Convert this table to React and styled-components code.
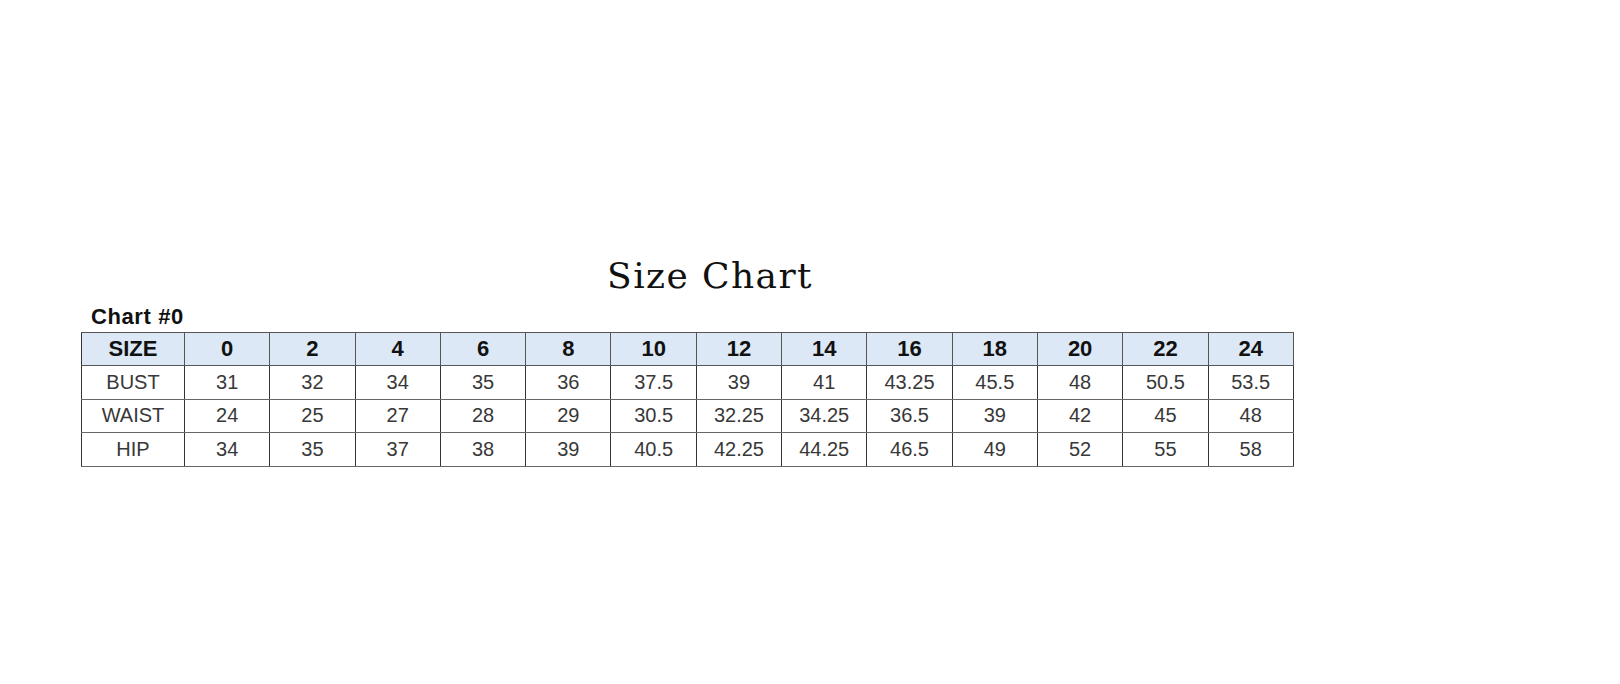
import React from 'react';
import styled, { createGlobalStyle } from 'styled-components';

const GlobalStyle = createGlobalStyle`
  html, body {
    margin: 0;
    padding: 0;
    background: #ffffff;
  }
`;

const Page = styled.div`
  width: 1620px;
  height: 684px;
  box-sizing: border-box;
  padding: 258px 0 0 81px;
  background: #ffffff;
`;

const Chart = styled.div`
  width: 1212px;
  display: flex;
  flex-direction: column;
`;

const Title = styled.h2`
  margin: 0;
  padding-left: 46px;
  text-align: center;
  font-family: "DejaVu Serif", "Liberation Serif", serif;
  font-weight: normal;
  font-size: 36px;
  line-height: 36px;
  letter-spacing: 1.4px;
  color: #111;
`;

const Label = styled.div`
  margin: 12px 0 0 10px;
  font-family: "Liberation Sans", Arial, sans-serif;
  font-weight: bold;
  font-size: 22px;
  line-height: 22px;
  letter-spacing: 0.6px;
  color: #111;
`;

const Table = styled.table`
  margin-top: 4px;
  width: 1212px;
  table-layout: fixed;
  border-collapse: collapse;
  border: 1px solid #333;
  font-family: "Liberation Sans", Arial, sans-serif;
`;

const Col = styled.col`
  width: ${p => (p.$first ? '103px' : '85.3px')};
`;

const HeadCell = styled.th`
  height: 32px;
  padding: 0;
  background: #dce8f5;
  border: 1px solid #555;
  border-left-color: #333;
  font-size: 22px;
  font-weight: bold;
  color: #111;
  text-align: center;
`;

const Cell = styled.td`
  height: 32.5px;
  padding: 0;
  border-top: 1px solid #666;
  border-bottom: 1px solid #666;
  border-left: 1px solid #333;
  font-size: 20px;
  color: #383838;
  text-align: center;
`;

const sizes = ['0', '2', '4', '6', '8', '10', '12', '14', '16', '18', '20', '22', '24'];

const rows = [
  ['BUST', '31', '32', '34', '35', '36', '37.5', '39', '41', '43.25', '45.5', '48', '50.5', '53.5'],
  ['WAIST', '24', '25', '27', '28', '29', '30.5', '32.25', '34.25', '36.5', '39', '42', '45', '48'],
  ['HIP', '34', '35', '37', '38', '39', '40.5', '42.25', '44.25', '46.5', '49', '52', '55', '58'],
];

function App() {
  return (
    <Page>
      <GlobalStyle />
      <Chart>
        <Title>Size Chart</Title>
        <Label>Chart #0</Label>
        <Table>
          <colgroup>
            <Col $first />
            {sizes.map(s => <Col key={s} />)}
          </colgroup>
          <thead>
            <tr>
              <HeadCell>SIZE</HeadCell>
              {sizes.map(s => <HeadCell key={s}>{s}</HeadCell>)}
            </tr>
          </thead>
          <tbody>
            {rows.map(r => (
              <tr key={r[0]}>
                {r.map((v, i) => <Cell key={i}>{v}</Cell>)}
              </tr>
            ))}
          </tbody>
        </Table>
      </Chart>
    </Page>
  );
}

export default App;
